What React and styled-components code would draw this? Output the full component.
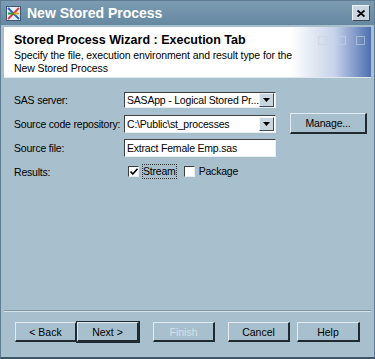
import React from "react";
import styled, { createGlobalStyle } from "styled-components";

const Global = createGlobalStyle`
  html, body { margin: 0; padding: 0; background: #a8bfcd; }
  body { font-family: "Liberation Sans", Arial, sans-serif; }
`;

const Window = styled.div`
  width: 375px;
  height: 359px;
  box-sizing: border-box;
  background: #a8bfcd;
  border: 1px solid #5f7c92;
  border-bottom: 2px solid #3e5566;
  display: flex;
  flex-direction: column;
`;

const TitleBar = styled.div`
  height: 24px;
  display: flex;
  align-items: center;
  padding: 0 4px 0 5px;
  background: linear-gradient(to bottom, #7d9cb3, #6588a1);
  color: #fff;
  font-weight: bold;
  font-size: 14px;
  gap: 6px;
`;

const TitleText = styled.span`
  flex: 1;
`;

const CloseButton = styled.div`
  width: 16px;
  height: 14px;
  background: #c9d6df;
  border: 1px solid #eef2f5;
  border-right-color: #3b4c58;
  border-bottom-color: #3b4c58;
  display: flex;
  align-items: center;
  justify-content: center;
`;

const Header = styled.div`
  margin: 2px 3px 0 3px;
  height: 51px;
  padding: 6px 10px 0 10px;
  box-sizing: border-box;
  background: linear-gradient(to right, #fff 0%, #fff 78%, #c7d3ea 90%, #4d6fb1 100%);
  border-bottom: 1px solid #e0e8ef;
  position: relative;
`;

const HeaderTitle = styled.div`
  font-weight: bold;
  font-size: 12.5px;
  color: #000;
`;

const HeaderDesc = styled.div`
  font-size: 10.5px;
  line-height: 13px;
  margin-top: 2px;
  color: #000;
  letter-spacing: -0.1px;
  width: 290px;
`;

const Squares = styled.div`
  position: absolute;
  right: 6px;
  top: 9px;
  display: flex;
  gap: 10px;
`;

const Square = styled.div`
  width: 7px;
  height: 7px;
  border: 1px solid rgba(200, 210, 225, 0.6);
`;

const Form = styled.div`
  display: grid;
  grid-template-columns: 110px auto auto;
  grid-auto-rows: 23px;
  row-gap: 1px;
  padding: 10px 0 0 13px;
  align-items: center;
  font-size: 10.5px;
  letter-spacing: -0.2px;
`;

const Label = styled.div`
  color: #000;
  white-space: nowrap;
`;

const Field = styled.div`
  width: 152px;
  box-sizing: border-box;
  background: #fff;
  border: 1px solid #404040;
  border-right-color: #e8eef2;
  border-bottom-color: #e8eef2;
  display: flex;
  align-items: center;
  line-height: 14px;
  padding-left: 2px;
  white-space: nowrap;
  overflow: hidden;
  height: ${(p) => (p.$tall ? "18px" : "16px")};
`;

const FieldText = styled.span`
  flex: 1;
  overflow: hidden;
`;

const Arrow = styled.div`
  flex: none;
  width: 13px;
  height: 12px;
  margin-right: 1px;
  background: #c9d6df;
  border: 1px solid #f2f5f7;
  border-right-color: #3b4c58;
  border-bottom-color: #3b4c58;
  display: flex;
  align-items: center;
  justify-content: center;
`;

const Button = styled.div`
  width: ${(p) => p.$w || 62}px;
  height: 20px;
  box-sizing: border-box;
  background: #a8bfcd;
  border: 1px solid #e3ebf0;
  border-right: 2px solid #1f2a31;
  border-bottom: 2px solid #1f2a31;
  outline: ${(p) => (p.$default ? "1px solid #1f2a31" : "none")};
  display: flex;
  align-items: center;
  justify-content: center;
  font-size: 10.5px;
  color: ${(p) => (p.$disabled ? "#d6e1e8" : "#000")};
`;

const ManageButton = styled(Button)`
  margin-left: 7px;
  height: 21px;
`;

const Checks = styled.div`
  display: flex;
  align-items: center;
  padding-left: 4px;
`;

const Box = styled.div`
  width: 11px;
  height: 11px;
  box-sizing: border-box;
  background: #fff;
  border: 1px solid #404040;
  border-right-color: #e8eef2;
  border-bottom-color: #e8eef2;
  display: flex;
  align-items: center;
  justify-content: center;
  margin-right: 4px;
`;

const CheckLabel = styled.span`
  outline: ${(p) => (p.$focus ? "1px dotted #333" : "none")};
  margin-right: ${(p) => (p.$focus ? "8px" : "0")};
  line-height: 13px;
`;

const Spacer = styled.div`
  flex: 1;
`;

const Separator = styled.div`
  margin: 0 3px;
  height: 0;
  border-top: 1px solid #7f98a8;
  border-bottom: 1px solid #d6e2ea;
`;

const Footer = styled.div`
  display: flex;
  align-items: center;
  padding: 10px 0 15px 14px;
`;

const Gap = styled.div`
  width: ${(p) => p.$w}px;
`;

const DownArrow = () => (
  <svg width="7" height="4" viewBox="0 0 7 4">
    <path d="M0 0h7L3.5 4z" fill="#000" />
  </svg>
);

const AppIcon = () => (
  <svg width="15" height="15" viewBox="0 0 15 15">
    <rect x="0.5" y="0.5" width="14" height="14" fill="#e9eef2" stroke="#3a5a78" />
    <path d="M2 2l11 11" stroke="#2c62c4" strokeWidth="2" />
    <path d="M13 2L2 13" stroke="#d43a3a" strokeWidth="2" />
    <path d="M2 7.5h5" stroke="#2a9a3a" strokeWidth="2" />
    <path d="M8 7.5h5" stroke="#e0a020" strokeWidth="2" />
  </svg>
);

const Combo = ({ text, tall }) => (
  <Field $tall={tall}>
    <FieldText>{text}</FieldText>
    <Arrow>
      <DownArrow />
    </Arrow>
  </Field>
);

export default function App() {
  return (
    <>
      <Global />
      <Window>
        <TitleBar>
          <AppIcon />
          <TitleText>New Stored Process</TitleText>
          <CloseButton>
            <svg width="8" height="7" viewBox="0 0 8 7">
              <path d="M0.5 0.5l7 6M7.5 0.5l-7 6" stroke="#000" strokeWidth="1.8" />
            </svg>
          </CloseButton>
        </TitleBar>
        <Header>
          <HeaderTitle>Stored Process Wizard : Execution Tab</HeaderTitle>
          <HeaderDesc>
            Specify the file, execution environment and result type for the New Stored Process
          </HeaderDesc>
          <Squares>
            <Square />
            <Square />
            <Square />
          </Squares>
        </Header>
        <Form>
          <Label>SAS server:</Label>
          <Combo text="SASApp - Logical Stored Pr..." />
          <div />
          <Label>Source code repository:</Label>
          <Combo text="C:\Public\st_processes" tall />
          <ManageButton $w={77}>Manage...</ManageButton>
          <Label>Source file:</Label>
          <Field $tall>Extract Female Emp.sas</Field>
          <div />
          <Label>Results:</Label>
          <Checks>
            <Box>
              <svg width="8" height="7" viewBox="0 0 8 7">
                <path d="M0.5 3.5l2.3 2.5L7.5 0.8" stroke="#000" strokeWidth="1.6" fill="none" />
              </svg>
            </Box>
            <CheckLabel $focus>Stream</CheckLabel>
            <Box />
            <CheckLabel>Package</CheckLabel>
          </Checks>
          <div />
        </Form>
        <Spacer />
        <Separator />
        <Footer>
          <Button>&lt; Back</Button>
          <Button $default>Next &gt;</Button>
          <Gap $w={14} />
          <Button $disabled>Finish</Button>
          <Gap $w={13} />
          <Button>Cancel</Button>
          <Gap $w={7} />
          <Button $w={63}>Help</Button>
        </Footer>
      </Window>
    </>
  );
}
